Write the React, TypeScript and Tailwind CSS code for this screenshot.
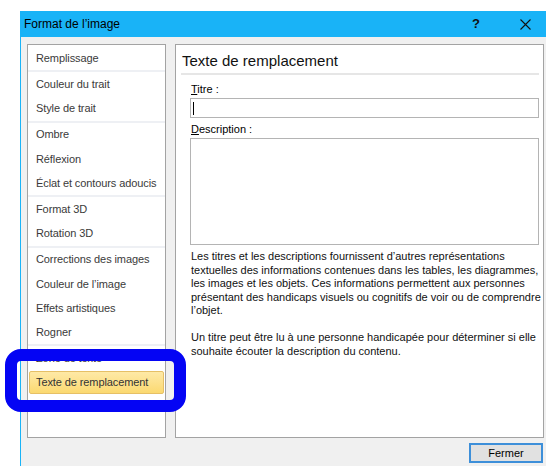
import { Fragment } from "react";

type Group = string[];

const groups: Group[] = [
  ["Remplissage"],
  ["Couleur du trait", "Style de trait"],
  ["Ombre", "Réflexion", "Éclat et contours adoucis"],
  ["Format 3D", "Rotation 3D"],
  ["Corrections des images", "Couleur de l’image", "Effets artistiques", "Rogner"],
  ["Zone de texte", "Texte de remplacement"],
];

const selected = "Texte de remplacement";

const helpLines = [
  "Les titres et les descriptions fournissent d’autres représentations",
  "textuelles des informations contenues dans les tables, les diagrammes,",
  "les images et les objets. Ces informations permettent aux personnes",
  "présentant des handicaps visuels ou cognitifs de voir ou de comprendre",
  "l’objet.",
];

const helpLines2 = [
  "Un titre peut être lu à une personne handicapée pour déterminer si elle",
  "souhaite écouter la description du contenu.",
];

function CloseIcon() {
  return (
    <svg width="11" height="11" viewBox="0 0 11 11" className="block">
      <path d="M0.5 0.5 L10.5 10.5 M10.5 0.5 L0.5 10.5" stroke="#111" strokeWidth="1.1" fill="none" />
    </svg>
  );
}

function NavItem({ label }: { label: string }) {
  if (label === selected) {
    return (
      <div className="flex h-[24.2px] items-center px-px">
        <div className="flex h-[23px] w-full items-center rounded-[2px] border border-[#e6c066] bg-gradient-to-b from-[#fee9a6] to-[#fbd970] pl-[6px] text-[#333]">
          {label}
        </div>
      </div>
    );
  }
  return <div className="flex h-[24.2px] items-center pl-[8px] text-[#3a3a3a]">{label}</div>;
}

export default function App() {
  return (
    <div className="relative h-[466px] w-[546px] overflow-hidden bg-white pl-[20px] pt-[11px] font-['Liberation_Sans',Arial,sans-serif] text-[11px] text-black">
      <div className="flex h-[455px] w-[526px] flex-col border-l border-[#19b3f7] bg-[#f0f0f0]">
        {/* title bar */}
        <div className="flex h-[26px] items-center bg-[#19b3f7] pl-[3px]">
          <span className="text-[12px] text-black">Format de l’image</span>
          <span className="ml-auto mr-[39px] w-[10px] text-center text-[13px] font-bold text-[#111]">?</span>
          <span className="mr-[15px]">
            <CloseIcon />
          </span>
        </div>

        {/* panels */}
        <div className="flex gap-[9px] pl-[6px] pt-[7px]">
          <div className="h-[394px] w-[139px] border border-[#a3a3a3] bg-white pt-px tracking-[-0.1px]">
            {groups.map((g, i) => (
              <Fragment key={i}>
                {i > 0 && <div className="h-[2px] bg-[#eef0f4]" />}
                {g.map((label) => (
                  <NavItem key={label} label={label} />
                ))}
              </Fragment>
            ))}
          </div>

          <div className="flex h-[394px] w-[369px] flex-col border border-[#a3a3a3] bg-white">
            <div className="pl-[6px] pt-[6px] text-[15px] leading-[20px] text-[#111]">Texte de remplacement</div>
            <div className="ml-[5px] mr-[4px] mt-[2px] h-[2px] bg-[#e6e6e6]" />

            <div className="ml-[15px] mt-[7px] leading-[14px]">
              <span className="underline">T</span>itre :
            </div>
            <div className="ml-[14px] mr-[4px] mt-[2px] flex h-[20px] items-center border border-[#b4b4b4] bg-white pl-[2px]">
              <div className="h-[13px] w-px bg-black" />
            </div>

            <div className="ml-[15px] mt-[4px] leading-[14px]">
              <span className="underline">D</span>escription :
            </div>
            <div className="ml-[14px] mr-[4px] mt-[2px] h-[107px] border border-[#b4b4b4] bg-white" />

            <div className="ml-[15px] mt-[5px] whitespace-nowrap leading-[13.5px] text-[#111]">
              {helpLines.map((l) => (
                <div key={l}>{l}</div>
              ))}
              <div className="h-[13.5px]" />
              {helpLines2.map((l) => (
                <div key={l}>{l}</div>
              ))}
            </div>
          </div>
        </div>

        {/* footer */}
        <div className="mt-[5px] flex justify-end pr-[3px]">
          <button className="h-[20px] w-[74px] border-2 border-[#3d8fd9] bg-[#e1e1e1] text-[11px] text-black">
            Fermer
          </button>
        </div>
      </div>

      {/* highlight around the selected entry */}
      <div className="absolute left-[5px] top-[349px] h-[63px] w-[181px] rounded-[16px] border-[12px] border-[#0404f4]" />
    </div>
  );
}
